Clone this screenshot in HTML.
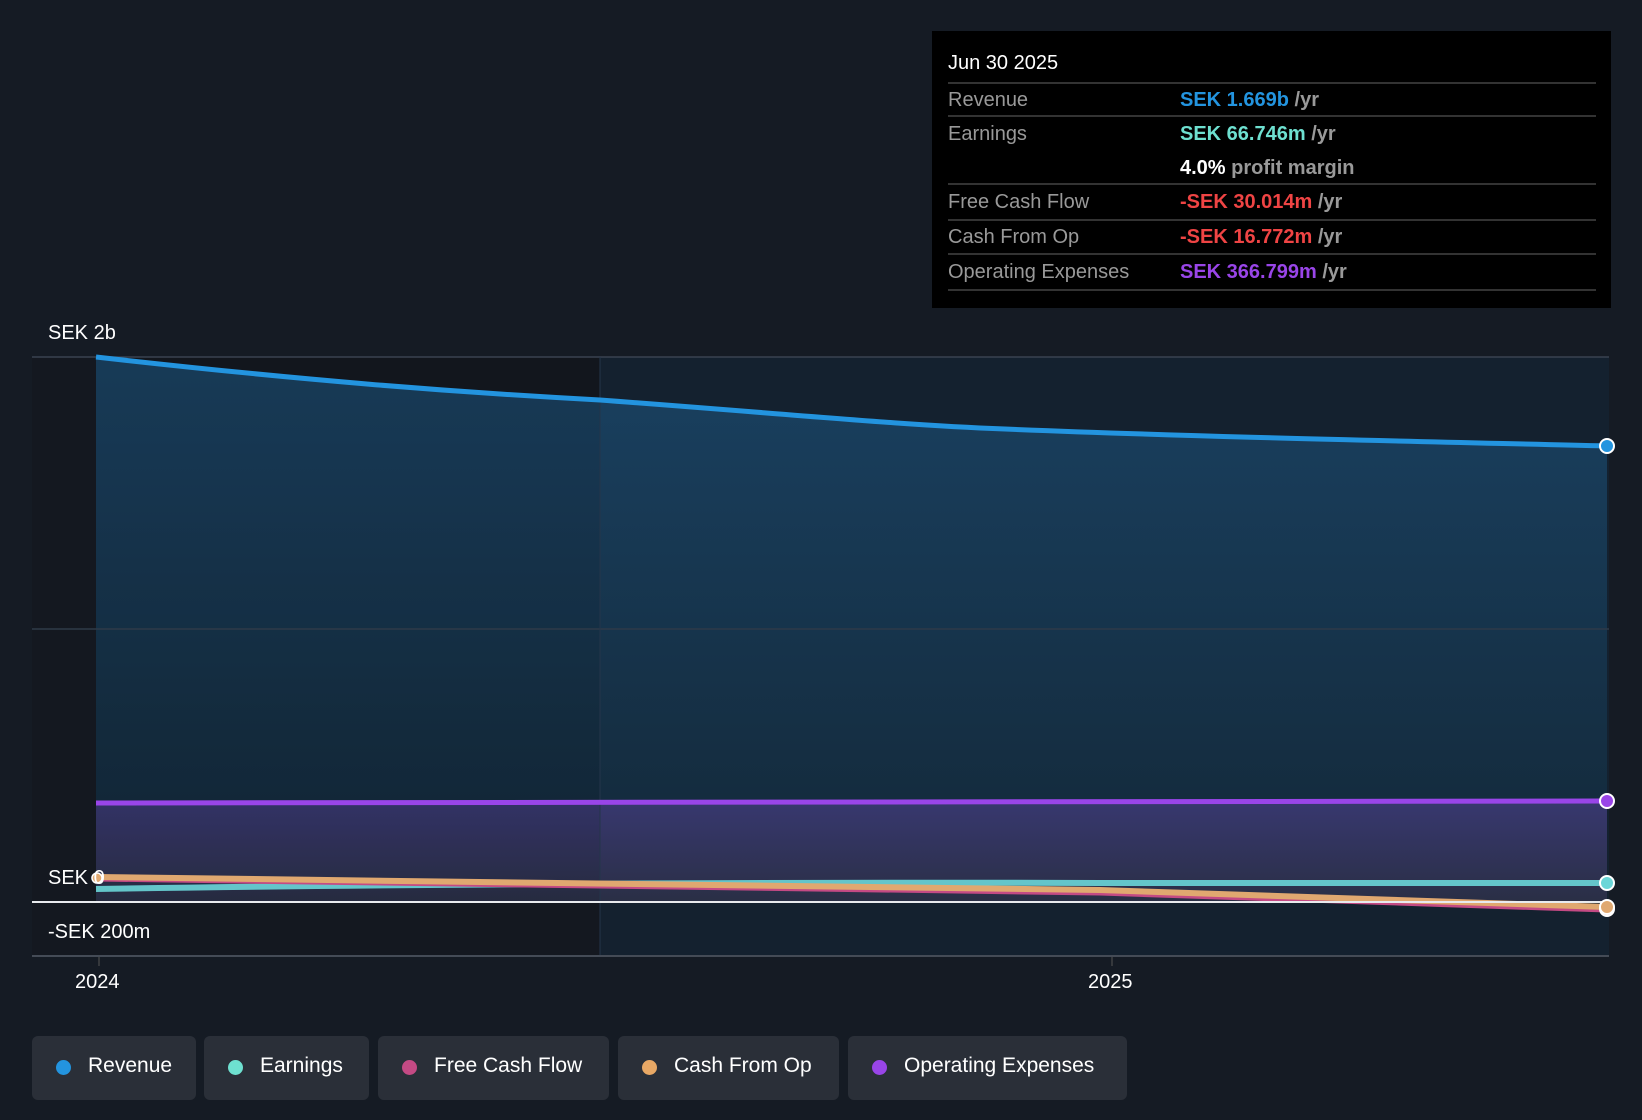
<!DOCTYPE html>
<html><head><meta charset="utf-8"><style>
body{margin:0;width:1642px;height:1120px;background:#151b24;font-family:"Liberation Sans",sans-serif;overflow:hidden;position:relative}
.tt{position:absolute;left:932px;top:31px;width:679px;height:277px;background:#000}
.tt .h{position:absolute;left:16px;top:21px;color:#fff;font-size:20px}
.row{position:absolute;left:16px;width:648px;border-top:2px solid #333;color:#999;font-size:20px}
.row span{position:absolute;left:232px;font-weight:bold}
.lbl{position:absolute;color:#fff;font-size:20px}
.leg{position:absolute;top:1036px;height:64px;background:#2a2f38;border-radius:6px;color:#fff;font-size:21px;line-height:60px;box-sizing:border-box;padding-left:56px}
.leg i{position:absolute;left:24px;top:24px;width:15px;height:15px;border-radius:50%}
</style></head><body>
<svg width="1642" height="1120" style="position:absolute;left:0;top:0">
<defs>
<linearGradient id="rg" x1="0" y1="0" x2="0" y2="1"><stop offset="0" stop-color="#1a4466"/><stop offset="1" stop-color="#132838"/></linearGradient>
<linearGradient id="og" x1="0" y1="0" x2="0" y2="1"><stop offset="0" stop-color="#3e3a78"/><stop offset="1" stop-color="#2e3048"/></linearGradient>
</defs>
<rect x="32" y="357" width="568" height="599" fill="#141820"/>
<rect x="600" y="357" width="1009" height="599" fill="#14212f"/>
<path d="M96,357 C300,380 450,392 600,400 C800,415 900,425 1005,429 C1200,437 1400,441 1607,446 L1607,901 L96,901Z" fill="url(#rg)" opacity="0.9"/>
<path d="M96,803 L1607,801 L1607,901 L96,901Z" fill="url(#og)" opacity="0.85"/>
<rect x="96" y="357" width="504" height="545" fill="#000" opacity="0.08"/>
<line x1="32" y1="357" x2="1609" y2="357" stroke="#3a4250" stroke-width="1.5"/>
<line x1="32" y1="629" x2="1609" y2="629" stroke="#2e3a48" stroke-width="1.5"/>
<line x1="600" y1="357" x2="600" y2="956" stroke="#24354a" stroke-width="1"/>
<path d="M96,357 C300,380 450,392 600,400 C800,415 900,425 1005,429 C1200,437 1400,441 1607,446" fill="none" stroke="#2394df" stroke-width="5"/>
<path d="M96,803 L1607,801" stroke="#9945e8" stroke-width="5"/>
<path d="M96,889 C400,884 800,882 1100,883 L1607,883" fill="none" stroke="#6ad6d8" stroke-width="6" opacity="0.9"/>
<path d="M96,879 C500,886 900,888 1100,893 C1300,900 1450,905 1607,910" fill="none" stroke="#c44a84" stroke-width="5"/>
<path d="M96,877 C500,882 900,886 1100,890 C1300,896 1450,902 1607,907" fill="none" stroke="#e0a870" stroke-width="6"/>
<line x1="32" y1="902" x2="1609" y2="902" stroke="#e8eaee" stroke-width="2"/>
<line x1="32" y1="956" x2="1609" y2="956" stroke="#444b56" stroke-width="2"/>
<line x1="99" y1="957" x2="99" y2="966" stroke="#555" stroke-width="1"/>
<line x1="1112" y1="957" x2="1112" y2="966" stroke="#555" stroke-width="1"/>
<circle cx="1607" cy="446" r="7" fill="#2394df" stroke="#fff" stroke-width="2"/>
<circle cx="1607" cy="801" r="7" fill="#9945e8" stroke="#fff" stroke-width="2"/>
<circle cx="1607" cy="883" r="7" fill="#6ad6d8" stroke="#fff" stroke-width="2"/>
<circle cx="1607" cy="909" r="7" fill="#c44a84" stroke="#fff" stroke-width="2"/>
<circle cx="1607" cy="907" r="7" fill="#e0a870" stroke="#fff" stroke-width="2"/>
<circle cx="97" cy="878" r="5" fill="#e0a870" stroke="#fff" stroke-width="1.5"/>
</svg>
<div class="lbl" style="left:48px;top:322px">SEK 2b</div>
<div class="lbl" style="left:48px;top:867px">SEK 0</div>
<div class="lbl" style="left:48px;top:921px">-SEK 200m</div>
<div class="lbl" style="left:75px;top:971px">2024</div>
<div class="lbl" style="left:1088px;top:971px">2025</div>
<div class="tt">
<div class="h">Jun 30 2025</div>
<div class="row" style="top:51px;height:32px;line-height:32px">Revenue<span style="color:#2394df">SEK 1.669b <b style="color:#999">/yr</b></span></div>
<div class="row" style="top:84px;height:66px;line-height:34px">Earnings<span style="color:#6ee0d0">SEK 66.746m <b style="color:#999">/yr</b><br><b style="color:#fff">4.0%</b> <b style="color:#999">profit margin</b></span></div>
<div class="row" style="top:152px;height:34px;line-height:34px">Free Cash Flow<span style="color:#ef4444">-SEK 30.014m <b style="color:#999">/yr</b></span></div>
<div class="row" style="top:188px;height:32px;line-height:32px">Cash From Op<span style="color:#ef4444">-SEK 16.772m <b style="color:#999">/yr</b></span></div>
<div class="row" style="top:222px;height:34px;line-height:34px;border-bottom:2px solid #333">Operating Expenses<span style="color:#9945e8">SEK 366.799m <b style="color:#999">/yr</b></span></div>
</div>
<div class="leg" style="left:32px;width:164px"><i style="background:#2394df"></i>Revenue</div>
<div class="leg" style="left:204px;width:165px"><i style="background:#6ee0d0"></i>Earnings</div>
<div class="leg" style="left:378px;width:231px"><i style="background:#c44a84"></i>Free Cash Flow</div>
<div class="leg" style="left:618px;width:221px"><i style="background:#e8a865"></i>Cash From Op</div>
<div class="leg" style="left:848px;width:279px"><i style="background:#9945e8"></i>Operating Expenses</div>
</body></html>
